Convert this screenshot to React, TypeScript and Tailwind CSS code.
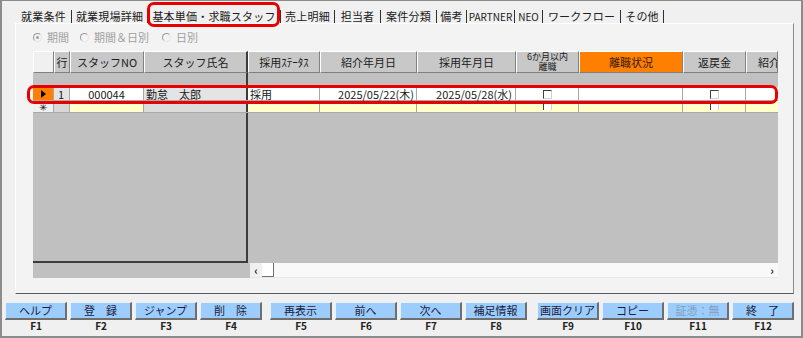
import clsx from "clsx";
import { ReactNode } from "react";

type Tab = { label: string; w: string; latin?: boolean };

const tabs: Tab[] = [
    { label: "就業条件", w: "w-[56px]" },
    { label: "就業現場詳細", w: "w-[76px]" },
    { label: "基本単価・求職スタッフ", w: "w-[133px]" },
    { label: "売上明細", w: "w-[54px]" },
    { label: "担当者", w: "w-[46px]" },
    { label: "案件分類", w: "w-[56px]" },
    { label: "備考", w: "w-[30px]" },
    { label: "PARTNER", w: "w-[48px]", latin: true },
    { label: "NEO", w: "w-[28px]", latin: true },
    { label: "ワークフロー", w: "w-[78px]" },
    { label: "その他", w: "w-[43px]" },
];

type Col = { w: string; label: string };

const cols: Col[] = [
    { w: "w-[21px]", label: "" },
    { w: "w-[16px]", label: "行" },
    { w: "w-[74px]", label: "スタッフNO" },
    { w: "w-[104px]", label: "スタッフ氏名" },
    { w: "w-[72px]", label: "採用ｽﾃｰﾀｽ" },
    { w: "w-[97px]", label: "紹介年月日" },
    { w: "w-[99px]", label: "採用年月日" },
    { w: "w-[63px]", label: "6か月以内" },
    { w: "w-[104px]", label: "離職状況" },
    { w: "w-[63px]", label: "返戻金" },
    { w: "w-[32px]", label: "紹介年月日" },
];

type FKey = { label: string; key: string; disabled?: boolean; gap?: string };

const fkeys: FKey[] = [
    { label: "ヘルプ", key: "F1" },
    { label: "登　録", key: "F2" },
    { label: "ジャンプ", key: "F3" },
    { label: "削　除", key: "F4" },
    { label: "再表示", key: "F5", gap: "ml-[8px]" },
    { label: "前へ", key: "F6" },
    { label: "次へ", key: "F7" },
    { label: "補足情報", key: "F8" },
    { label: "画面クリア", key: "F9", gap: "ml-[10px]" },
    { label: "コピー", key: "F10" },
    { label: "証憑：無", key: "F11", disabled: true },
    { label: "終　了", key: "F12" },
];

const Radio = ({ label, checked, className }: { label: string; checked?: boolean; className?: string }) => (
    <div className={clsx("flex items-center gap-[5px]", className)}>
        <span className="w-[9px] h-[9px] rounded-full border border-[#9a9a9a] border-r-[#e4e4e4] border-b-[#e4e4e4] flex items-center justify-center">
            {checked && <span className="w-[3px] h-[3px] rounded-full bg-[#a0a0a0]" />}
        </span>
        <span>{label}</span>
    </div>
);

const Cell = ({ w, className, children }: { w: string; className?: string; children?: ReactNode }) => (
    <div className={clsx("shrink-0 h-full flex items-center whitespace-nowrap leading-none border-r border-[#a8a8a8]", w, className)}>
        {children}
    </div>
);

const Check = () => (
    <span className="w-[9px] h-[9px] bg-white border border-l-[#404040] border-t-[#404040] border-r-[#d0d0d0] border-b-[#d0d0d0]" />
);

const App = () => {
    return (
        <div className="w-[803px] h-[338px] overflow-hidden relative bg-[#f0f0f0] border-t border-l-2 border-r-2 border-b-2 border-[#8c8c8c] font-['Noto_Sans_CJK_JP',sans-serif] text-[#202020]">
            {/* tabs */}
            <div className="h-[22px] flex items-end pl-[14px]">
                {tabs.map((t) => (
                    <div
                        key={t.label}
                        className={clsx(
                            "h-[13px] flex items-center justify-center border-r border-[#303030] whitespace-nowrap",
                            t.w,
                            t.latin ? "text-[10px]" : "text-[11px] tracking-[0.2px]"
                        )}
                    >
                        {t.label}
                    </div>
                ))}
            </div>

            {/* tab panel */}
            <div className="ml-[13px] w-[779px] h-[271px] border border-t-white border-l-white border-r-[#8a8a8a] border-b-[#5a5a5a] bg-[#f3f3f3] flex flex-col">
                <div className="h-[12px] mt-[7px] ml-[17px] flex items-center text-[11px] text-[#a0a0a0]">
                    <Radio label="期間" checked />
                    <Radio label="期間＆日別" className="ml-[11px]" />
                    <Radio label="日別" className="ml-[13px]" />
                </div>

                {/* grid */}
                <div className="mt-[8px] ml-[17px] w-[745px] h-[227px] flex flex-col text-[11px] bg-[#c0c0c0]">
                    {/* header */}
                    <div className="h-[22px] flex shrink-0">
                        {cols.map((c, i) => (
                            <div
                                key={i}
                                className={clsx(
                                    "shrink-0 h-full flex items-center whitespace-nowrap border-t border-l border-t-white border-l-white border-b border-b-[#808080]",
                                    c.w,
                                    i === 0 ? "bg-[#f0f0f0]" : i === 8 ? "bg-[#ff8000] text-[#3a1a00]" : "bg-[#c8c8c8]",
                                    i === 3 ? "border-r-2 border-r-[#3c3c3c]" : "border-r border-r-[#808080]",
                                    i === 10 ? "justify-start pl-[11px] overflow-hidden" : "justify-center"
                                )}
                            >
                                {i === 7 ? (
                                    <div className="flex flex-col items-center text-[9px] leading-[10px]">
                                        <span>6か月以内</span>
                                        <span>離職</span>
                                    </div>
                                ) : (
                                    c.label
                                )}
                            </div>
                        ))}
                    </div>

                    {/* spacer row */}
                    <div className="h-[15px] flex shrink-0">
                        <div className="w-[215px] h-full border-r-2 border-[#3c3c3c] border-b border-b-[#dcdcdc]" />
                        <div className="flex-1 h-full border-b border-[#dcdcdc]" />
                    </div>

                    {/* data row */}
                    <div className="h-[13px] flex shrink-0 border-b border-[#a8a8a8]">
                        <Cell w="w-[21px]" className="bg-[#ff8000] justify-center border-[#808080]">
                            <svg width="5" height="8" viewBox="0 0 5 8">
                                <polygon points="0,0 5,4 0,8" fill="#000" />
                            </svg>
                        </Cell>
                        <Cell w="w-[16px]" className="bg-[#e4e4e4] justify-end pr-[5px]">1</Cell>
                        <Cell w="w-[74px]" className="bg-white justify-center">000044</Cell>
                        <Cell w="w-[104px]" className="bg-[#e4e4e4] pl-[2px] border-r-2 border-r-[#3c3c3c]">勤怠　太郎</Cell>
                        <Cell w="w-[72px]" className="bg-white pl-[2px]">採用</Cell>
                        <Cell w="w-[97px]" className="bg-white justify-end pr-[2px]">2025/05/22(木)</Cell>
                        <Cell w="w-[99px]" className="bg-white justify-end pr-[3px]">2025/05/28(水)</Cell>
                        <Cell w="w-[63px]" className="bg-white justify-center"><Check /></Cell>
                        <Cell w="w-[104px]" className="bg-white" />
                        <Cell w="w-[63px]" className="bg-white justify-center"><Check /></Cell>
                        <Cell w="w-[32px]" className="bg-white border-r-0" />
                    </div>

                    {/* new row */}
                    <div className="h-[12px] flex shrink-0 border-b border-[#a8a8a8]">
                        <Cell w="w-[21px]" className="bg-[#f0f0f0] justify-center text-[10px] border-[#808080]">✳</Cell>
                        <Cell w="w-[16px]" className="bg-[#d8d8d8]" />
                        <Cell w="w-[74px]" className="bg-[#ffffcc]" />
                        <Cell w="w-[104px]" className="bg-[#dcdcdc] border-r-2 border-r-[#3c3c3c]" />
                        <Cell w="w-[72px]" className="bg-[#ffffcc]" />
                        <Cell w="w-[97px]" className="bg-[#ffffcc]" />
                        <Cell w="w-[99px]" className="bg-[#ffffcc]" />
                        <Cell w="w-[63px]" className="bg-[#ffffcc] justify-center items-start"><span className="w-[9px] h-[9px] bg-white border-l border-r border-l-[#404040] border-r-[#d0d0d0]" /></Cell>
                        <Cell w="w-[104px]" className="bg-[#ffffcc]" />
                        <Cell w="w-[63px]" className="bg-[#ffffcc] justify-center items-start"><span className="w-[9px] h-[9px] bg-white border-l border-r border-l-[#404040] border-r-[#d0d0d0]" /></Cell>
                        <Cell w="w-[32px]" className="bg-[#ffffcc] border-r-0" />
                    </div>

                    {/* empty area */}
                    <div className="flex-1 flex">
                        <div className="w-[215px] h-full border-r-2 border-b-2 border-[#3c3c3c]" />
                        <div className="flex-1 h-full" />
                    </div>

                    {/* horizontal scrollbar */}
                    <div className="h-[15px] flex shrink-0">
                        <div className="w-[217px] h-full bg-[#c0c0c0]" />
                        <div className="flex-1 h-full flex bg-[#f9f9f9] border-b border-[#e8e8e8]">
                            <div className="w-[12px] h-full flex items-center justify-center bg-[#f0f0f0] text-[11px] font-bold leading-none">‹</div>
                            <div className="w-[12px] h-full bg-white border-r border-b border-[#707070]" />
                            <div className="flex-1" />
                            <div className="w-[12px] h-full flex items-center justify-center text-[11px] font-bold leading-none">›</div>
                        </div>
                    </div>
                </div>
            </div>

            {/* function keys */}
            <div className="mt-[8px] pl-[3px] flex">
                {fkeys.map((f) => (
                    <div key={f.key} className={clsx("w-[62px] flex flex-col items-center", f.key !== "F1" && "ml-[3px]", f.gap)}>
                        <div
                            className={clsx(
                                "w-full h-[18px] flex items-center justify-center bg-[#9dcdfd] border border-t-[#e6f2ff] border-l-[#e6f2ff] border-r-2 border-b-2 border-r-[#6e6e6e] border-b-[#6e6e6e] text-[11px] whitespace-nowrap",
                                f.disabled ? "text-[#7f9fbf]" : "text-[#1c1c40]"
                            )}
                        >
                            {f.label}
                        </div>
                        <div className="h-[12px] flex items-center text-[10px] font-semibold leading-none text-[#202020]">{f.key}</div>
                    </div>
                ))}
            </div>

            {/* red annotations */}
            <div className="absolute left-[145px] top-[1px] w-[133px] h-[25px] border-[3px] border-[#e60000] rounded-[7px]" />
            <div className="absolute left-[25px] top-[84px] w-[751px] h-[19px] border-[3px] border-[#e60000] rounded-[7px]" />
        </div>
    );
};

export default App;
